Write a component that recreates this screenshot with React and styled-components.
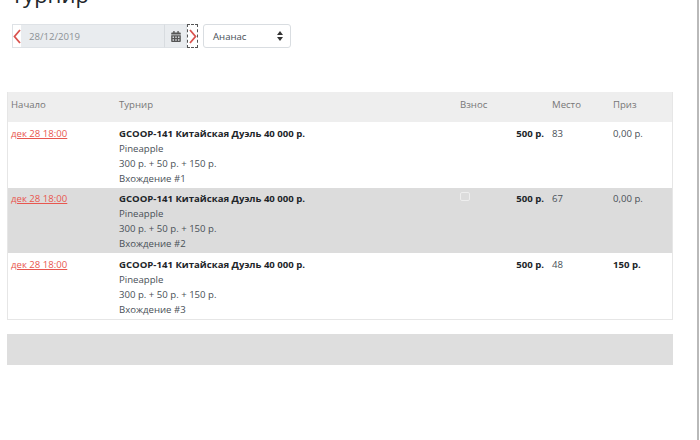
import React from "react";
import styled, { createGlobalStyle } from "styled-components";

const Global = createGlobalStyle`
  html, body { margin: 0; padding: 0; background: #fff; overflow: hidden; }
  body { font-family: "Open Sans", "Liberation Sans", sans-serif; color: #495057; }
  * { box-sizing: border-box; }
`;

const Page = styled.div`
  width: 699px;
  height: 440px;
  padding: 0 0 0 7px;
  overflow: hidden;
  border-right: 2px solid #b9b9b9;
`;

const Title = styled.h1`
  margin: -20px 0 0 4px;
  height: 44px;
  font-size: 22px;
  line-height: 28px;
  font-weight: 400;
  color: #212529;
`;

const Toolbar = styled.div`
  display: flex;
  align-items: stretch;
  height: 24px;
  margin-left: 5px;
`;

const DateGroup = styled.div`
  display: flex;
  width: 186px;
  height: 24px;
`;

const ArrowBox = styled.div`
  width: ${(p) => p.$w}px;
  flex: none;
  display: flex;
  align-items: center;
  justify-content: center;
  background: #fff;
  border: ${(p) => (p.$focus ? "1px dashed #555" : "1px solid #dee2e6")};
  border-right: ${(p) => (p.$focus ? "1px dashed #555" : "none")};
`;

const DateField = styled.div`
  flex: 1;
  display: flex;
  align-items: center;
  padding-left: 8px;
  background: #e9ecef;
  border: 1px solid #dee2e6;
  border-left: none;
  border-right: none;
  font-size: 9.6px;
  color: #8c9196;
`;

const CalendarAddon = styled.div`
  width: 23px;
  flex: none;
  display: flex;
  align-items: center;
  justify-content: center;
  background: #e9ecef;
  border: 1px solid #dee2e6;
  border-left: 1px solid #d8dce0;
`;

const Select = styled.div`
  width: 88px;
  margin-left: 5px;
  display: flex;
  align-items: center;
  justify-content: space-between;
  padding: 0 7px 0 9px;
  border: 1px solid #d9dde1;
  border-radius: 3px;
  background: #fff;
  font-size: 9.6px;
  color: #495057;
`;

const Table = styled.div`
  margin-top: 44px;
  width: 666px;
  border: 1px solid #e6e6e6;
  border-top: none;
`;

const Row = styled.div`
  display: grid;
  grid-template-columns: 108px 341px 92px 61px 1fr;
  height: ${(p) => p.$h}px;
  background: ${(p) => p.$bg};
  font-size: 9.6px;
  line-height: 15px;
  color: #495057;
`;

const HeadCell = styled.div`
  padding: 3px 3px 0;
  color: #777;
  line-height: 15px;
  display: flex;
  align-items: center;
  height: 21px;
`;

const Cell = styled.div`
  padding: 3.6px 3px 0;
  text-align: ${(p) => (p.$right ? "right" : "left")};
  padding-right: ${(p) => (p.$right ? "5px" : "3px")};
  position: relative;
`;

const DateLink = styled.a`
  color: #e8574f;
  text-decoration: underline;
`;

const Strong = styled.div`
  font-weight: 700;
  color: #212529;
`;

const Line = styled.div``;

const Mark = styled.span`
  position: absolute;
  left: 3px;
  top: 4px;
  width: 10px;
  height: 9px;
  border: 1px solid #eee;
  border-radius: 2px;
`;

const Footer = styled.div`
  margin-top: 14px;
  width: 666px;
  height: 31px;
  background: #dedede;
`;

const rows = [
  { n: 1, place: 83, prize: "0,00 р.", bg: "#fff" },
  { n: 2, place: 67, prize: "0,00 р.", bg: "#dcdcdc", mark: true },
  { n: 3, place: 48, prize: "150 р.", bold: true, bg: "#fff" },
];

const Chevron = ({ dir }) => (
  <svg width="8" height="15" viewBox="0 0 8 15" fill="none">
    <path d={dir === "l" ? "M7 1 L1.5 7.500 L7 14" : "M1 1 L6.500 7.500 L1 14"} stroke="#d9534f" strokeWidth="1.8" />
  </svg>
);

const Calendar = () => (
  <svg width="10" height="11" viewBox="0 0 448 512" fill="#555">
    <path d="M0 464c0 26.500 21.500 48 48 48h352c26.500 0 48-21.500 48-48V192H0v272zm320-196c0-6.600 5.400-12 12-12h40c6.600 0 12 5.400 12 12v40c0 6.600-5.400 12-12 12h-40c-6.600 0-12-5.400-12-12v-40zm0 128c0-6.600 5.400-12 12-12h40c6.600 0 12 5.400 12 12v40c0 6.600-5.400 12-12 12h-40c-6.600 0-12-5.400-12-12v-40zM192 268c0-6.600 5.400-12 12-12h40c6.600 0 12 5.400 12 12v40c0 6.600-5.400 12-12 12h-40c-6.600 0-12-5.400-12-12v-40zm0 128c0-6.600 5.400-12 12-12h40c6.600 0 12 5.400 12 12v40c0 6.600-5.400 12-12 12h-40c-6.600 0-12-5.400-12-12v-40zM64 268c0-6.600 5.400-12 12-12h40c6.600 0 12 5.400 12 12v40c0 6.600-5.400 12-12 12H76c-6.600 0-12-5.400-12-12v-40zm0 128c0-6.600 5.400-12 12-12h40c6.600 0 12 5.400 12 12v40c0 6.600-5.400 12-12 12H76c-6.600 0-12-5.400-12-12v-40zM400 64h-48V16c0-8.800-7.200-16-16-16h-32c-8.800 0-16 7.200-16 16v48H160V16c0-8.800-7.200-16-16-16h-32c-8.800 0-16 7.200-16 16v48H48C21.500 64 0 85.500 0 112v48h448v-48c0-26.500-21.500-48-48-48z" />
  </svg>
);

const Sort = () => (
  <svg width="6" height="10" viewBox="0 0 6 10" fill="#333">
    <path d="M3 0 L6 4 L0 4 Z M3 10 L0 6 L6 6 Z" />
  </svg>
);

export default function App() {
  return (
    <Page>
      <Global />
      <Title>Турнир</Title>
      <Toolbar>
        <DateGroup>
          <ArrowBox $w={9}><Chevron dir="l" /></ArrowBox>
          <DateField>28/12/2019</DateField>
          <CalendarAddon><Calendar /></CalendarAddon>
          <ArrowBox $w={11} $focus><Chevron dir="r" /></ArrowBox>
        </DateGroup>
        <Select>Ананас<Sort /></Select>
      </Toolbar>
      <Table>
        <Row $h={30} $bg="#eeeeee">
          <HeadCell>Начало</HeadCell>
          <HeadCell>Турнир</HeadCell>
          <HeadCell>Взнос</HeadCell>
          <HeadCell>Место</HeadCell>
          <HeadCell>Приз</HeadCell>
        </Row>
        {rows.map((r) => (
          <Row key={r.n} $h={65.67} $bg={r.bg}>
            <Cell><DateLink>дек 28 18:00</DateLink></Cell>
            <Cell>
              <Strong>GCOOP-141 Китайская Дуэль 40 000 р.</Strong>
              <Line>Pineapple</Line>
              <Line>300 р. + 50 р. + 150 р.</Line>
              <Line>Вхождение #{r.n}</Line>
            </Cell>
            <Cell $right>
              {r.mark && <Mark />}
              <Strong>500 р.</Strong>
            </Cell>
            <Cell>{r.place}</Cell>
            <Cell>{r.bold ? <Strong>{r.prize}</Strong> : r.prize}</Cell>
          </Row>
        ))}
      </Table>
      <Footer />
    </Page>
  );
}
